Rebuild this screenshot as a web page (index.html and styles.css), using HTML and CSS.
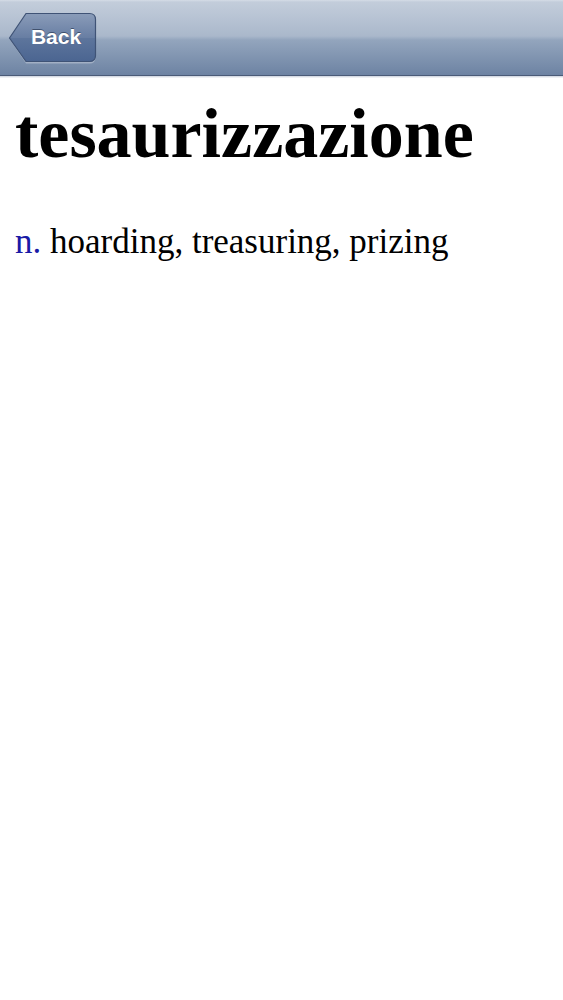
FILE: index.html
```html
<!DOCTYPE html>
<html>
<head>
<meta charset="utf-8">
<link rel="stylesheet" href="styles.css">
</head>
<body>
<header class="navbar">
  <button class="back">
    <svg class="back-shape" width="89" height="52" viewBox="0 0 89 52">
      <defs>
        <linearGradient id="bg" x1="0" y1="0" x2="0" y2="1">
          <stop offset="0" stop-color="#8a9cb9"/>
          <stop offset="0.5" stop-color="#687ea3"/>
          <stop offset="0.52" stop-color="#5d759c"/>
          <stop offset="1" stop-color="#4b6591"/>
        </linearGradient>
      </defs>
      <path d="M1.5 26 L18 2.5 H81.5 Q87.5 2.5 87.5 8.5 V44.5 Q87.5 50.5 81.5 50.5 H18 Z" fill="rgba(255,255,255,0.3)" transform="translate(0,1)"/>
      <path d="M1.5 26 L18 1.5 H81.5 Q87.5 1.5 87.5 7.5 V43.5 Q87.5 49.5 81.5 49.5 H18 Z" fill="url(#bg)" stroke="#3f5376" stroke-width="1.2"/>
    </svg>
    <span class="back-label">Back</span>
  </button>
</header>
<main class="content">
  <h1 class="word">tesaurizzazione</h1>
  <p class="def"><span class="pos">n.</span> hoarding, treasuring, prizing</p>
</main>
</body>
</html>
```
FILE: styles.css
```css
html, body {
  margin: 0;
  padding: 0;
  background: #ffffff;
}
.navbar {
  height: 76px;
  display: flex;
  align-items: center;
  padding-left: 8px;
  box-sizing: border-box;
  background: linear-gradient(to bottom, #d5dce6 0px, #c3cddb 2px, #aab8cb 36px, #93a5bd 40px, #6d83a3 75px);
  border-bottom: 1px solid #4a5b78;
  box-shadow: 0 1px 0 #d6dbe4, 0 2px 0 #eef0f4;
}
.back {
  position: relative;
  width: 89px;
  height: 52px;
  padding: 0;
  margin: 0;
  border: 0;
  background: transparent;
  display: flex;
  align-items: center;
  justify-content: center;
  padding-left: 7px;
  padding-bottom: 1px;
  box-sizing: border-box;
}
.back-shape {
  position: absolute;
  left: 0;
  top: 0;
}
.back-label {
  position: relative;
  font-family: "Liberation Sans", Arial, sans-serif;
  font-weight: 700;
  font-size: 21px;
  color: #ffffff;
  text-shadow: 0 -1px 0 rgba(30, 45, 70, 0.6);
}
.content {
  padding: 0 15px;
}
.word {
  margin: 18px 0 0;
  font-family: "Liberation Serif", "Times New Roman", serif;
  font-weight: 700;
  font-size: 70px;
  line-height: 80px;
  color: #000000;
}
.def {
  margin: 48px 0 0;
  font-family: "Liberation Serif", "Times New Roman", serif;
  font-size: 35px;
  line-height: 40px;
  color: #000000;
}
.pos {
  color: #1a1aa6;
}
```
